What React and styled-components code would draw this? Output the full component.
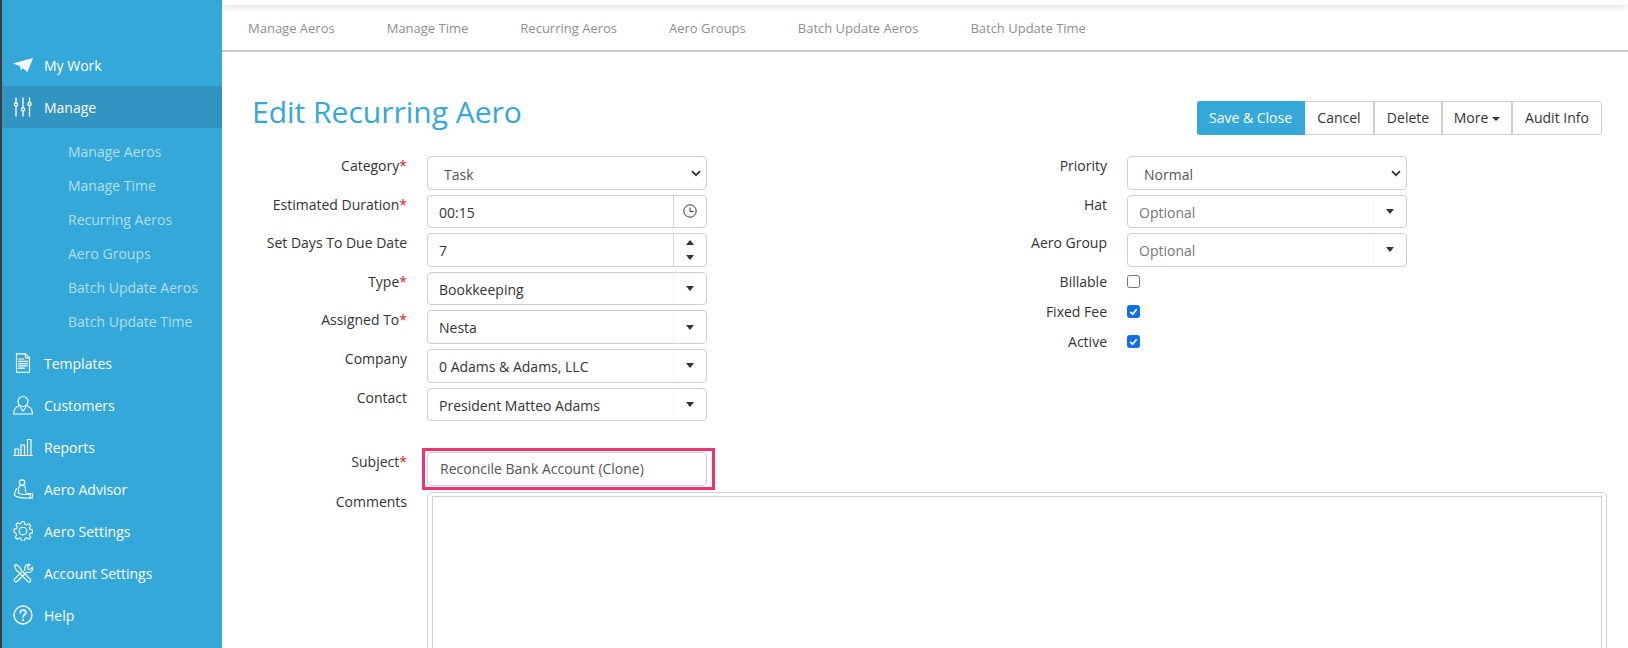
import React from 'react';
import styled, { createGlobalStyle } from 'styled-components';

const Global = createGlobalStyle`
  html, body { margin: 0; padding: 0; background: #fff; }
  #root { height: 648px; }
  * { box-sizing: border-box; }
`;

const BLUE = '#34a8d8';
const font = `"Open Sans", "Noto Sans", sans-serif`;

const Page = styled.div`
  display: flex; width: 1628px; height: 648px; overflow: hidden;
  font-family: ${font}; color: #333;
`;
const Sidebar = styled.nav`
  flex: 0 0 222px; height: 100%; background: ${BLUE};
  border-left: 2px solid #3a3f44; padding-top: 44px;
`;
const NavItem = styled.div`
  display: flex; align-items: center; height: 42px; padding-left: 11px; gap: 11px;
  color: #fff; font-size: 14px;
  background: ${p => (p.$active ? '#3194c1' : 'transparent')};
`;
const NavIcon = styled.svg`
  width: 20px; height: 20px; flex: none;
  fill: none; stroke: #fff; stroke-width: 1.15; stroke-linecap: round; stroke-linejoin: round;
`;
const SubList = styled.div`
  display: flex; flex-direction: column; padding: 7px 0 3px;
`;
const SubItem = styled.div`
  height: 34px; line-height: 34px; padding-left: 66px; font-size: 14px; color: #b3def2;
`;
const Main = styled.main`
  flex: 1; min-width: 0; display: flex; flex-direction: column;
`;
const TopStrip = styled.div`
  flex: none; height: 5px; background: #fff; position: relative;
  box-shadow: 0 2px 6px rgba(0, 0, 0, 0.14);
`;
const TabBar = styled.div`
  flex: none; display: flex; gap: 52px; align-items: center; height: 47px; padding-left: 26px;
  border-bottom: 2px solid #c9c9c9;
`;
const Tab = styled.span`
  font-size: 13px; color: #8f8f8f;
`;
const Header = styled.div`
  flex: none; display: flex; justify-content: space-between; align-items: flex-start;
  padding: 49px 26px 0 30px; height: 104px;
`;
const Title = styled.h1`
  margin: -8px 0 0; font-size: 30px; line-height: 38px; font-weight: 400; color: ${BLUE};
`;
const ButtonGroup = styled.div`
  display: flex; height: 34px;
`;
const ActionButton = styled.div`
  display: flex; align-items: center; justify-content: center; gap: 4px;
  width: ${p => p.$w}px; font-size: 14px; padding-bottom: 1px;
  border: 1px solid ${p => (p.$primary ? BLUE : '#cfcfcf')};
  border-left-width: ${p => (p.$primary || p.$afterPrimary ? 0 : 1)}px;
  background: ${p => (p.$primary ? BLUE : '#fff')};
  color: ${p => (p.$primary ? '#fff' : '#333')};
  &:first-child { border-radius: 3px 0 0 3px; }
  &:last-child { border-radius: 0 3px 3px 0; }
`;
const Caret = styled.i`
  display: inline-block; width: 0; height: 0; margin-top: 2px;
  border-left: 4px solid transparent; border-right: 4px solid transparent; border-top: 4px solid #333;
`;
const FormGrid = styled.div`
  flex: none; display: grid; grid-template-columns: 454px 454px; column-gap: 246px; padding-left: 31px;
`;
const Column = styled.div`
  display: flex; flex-direction: column;
`;
const Row = styled.div`
  display: grid; grid-template-columns: 154px 280px; column-gap: 20px;
  min-height: ${p => (p.$check ? 30 : 33.6)}px;
  align-items: ${p => (p.$check ? 'center' : 'start')};
  &:not(:first-child) { margin-top: ${p => (p.$check ? 0 : 5)}px; }
`;
const Label = styled.div`
  text-align: right; font-size: 14px; line-height: 20px; color: #333;
`;
const Req = styled.span`
  color: #d6202a;
`;
const Control = styled.div`
  display: flex; height: 33.6px; width: 280px; background: #fff;
  border: 1px solid #cfcfcf; border-radius: 4px;
  font-size: 14px; color: ${p => (p.$muted ? '#555' : '#333')};
`;
const Value = styled.div`
  flex: 1; min-width: 0; line-height: ${p => p.$lh || 34}px; padding-left: ${p => p.$pad || 11}px;
  color: ${p => p.$color || 'inherit'};
`;
const Addon = styled.div`
  flex: 0 0 33px; display: flex; flex-direction: column; align-items: center; justify-content: center; gap: 10px;
  border-left: 1px solid ${p => (p.$soft ? '#f7f7f7' : '#d4d4d4')};
`;
const Arrow = styled.i`
  display: block; width: 0; height: 0;
  border-left: 4px solid transparent; border-right: 4px solid transparent;
  ${p => (p.$up ? 'border-bottom: 5px solid #333;' : 'border-top: 5px solid #333;')}
`;
const Chevron = styled.svg`
  flex: none; width: 10px; height: 7px; margin: 13px 5px 0 0;
  fill: none; stroke: #333; stroke-width: 1.8;
`;
const ClockIcon = styled.svg`
  width: 14px; height: 14px; fill: none; stroke: #333; stroke-width: 1;
`;
const Box = styled.span`
  display: flex; align-items: center; justify-content: center;
  width: 13px; height: 13px; border-radius: 2.5px;
  border: 1px solid ${p => (p.$on ? '#0f6fe8' : '#767676')};
  background: ${p => (p.$on ? '#0f6fe8' : '#fff')};
`;
const Tick = styled.svg`
  width: 11px; height: 11px; fill: none; stroke: #fff; stroke-width: 2;
`;
const SubjectRow = styled(Row)`
  margin-top: 31px; margin-bottom: 6px;
`;
const Highlight = styled.div`
  position: relative; width: 280px;
  &::after {
    content: ''; position: absolute; left: -5px; right: -8px; top: -4px; bottom: -4px;
    border: 3px solid #f5316f; pointer-events: none;
  }
`;
const CommentsRow = styled.div`
  display: grid; grid-template-columns: 154px 1180px; column-gap: 20px; padding-left: 31px;
`;
const CommentsOuter = styled.div`
  height: 220px; padding: 3px 4px; border: 1px solid #d2d2d2; border-radius: 4px 4px 0 0;
`;
const CommentsInner = styled.div`
  height: 100%; border: 1px solid #d2d2d2;
`;

const icons = {
  plane: (
    <g>
      <path d="M0 8.500 L20 3 L14.500 17 L9.500 13 L8 15.500 L7 11 Z" fill="#fff" stroke="none" />
      <path d="M7 11 L20 3 M9.500 13 L20 3" stroke="#bfe3f3" strokeWidth=".6" />
    </g>
  ),
  sliders: (
    <g strokeWidth="1.3">
      <path d="M3 1v5M3 9v10M10 1v10M10 14v5M16.5 1v4.5M16.5 8.5V19" />
      <circle cx="3" cy="7.5" r="1.6" /><circle cx="10" cy="12.5" r="1.6" /><circle cx="16.5" cy="7" r="1.6" />
    </g>
  ),
  doc: (
    <g>
      <path d="M3.5 0.8h9l4 4.2v14.2h-13z" /><path d="M12.5 0.8v4.2h4" />
      <path d="M5.5 6h5M5.5 8.3h9M5.5 10.6h9M5.5 12.9h9M5.5 15.2h6" strokeWidth="1.2" />
    </g>
  ),
  user: (
    <g>
      <circle cx="10" cy="6.5" r="5" />
      <path d="M6.5 10.5 C2.5 12 0.5 14 0.5 19h19c0-5-2-7-6-8.500" />
      <path d="M7 12l3 4 3-4" />
    </g>
  ),
  chart: (
    <path d="M0.500 18.500h19M2 18.500v-6.500h3.500v6.500M8 18.500V8h3.500v10.500M14.500 18.500V2.500H18v16" />
  ),
  advisor: (
    <g>
      <circle cx="9" cy="3.500" r="2.700" />
      <path d="M5.500 13v-4c0-1.800 1.500-2.500 3.500-2.500s3.500.7 3.500 2.500v4" />
      <path d="M3.500 9.500L1.500 15c-.5 1.500.5 2 2 2.500 3 1.500 6 1.500 9 1.500h5v-3.500H10c-2-.3-4-1-5-2" />
      <path d="M13.500 14.500h6V19h-3" />
    </g>
  ),
  gear: (
    <g>
      <circle cx="10" cy="10" r="3.800" />
      <path d="M8.500 .8h3l.5 2.700 1.800.8 2.300-1.500 2.100 2.100-1.500 2.300.8 1.800 2.700.5v3l-2.700.5-.8 1.800 1.500 2.300-2.100 2.100-2.300-1.500-1.800.8-.5 2.700h-3l-.5-2.700-1.800-.8-2.300 1.500-2.100-2.100 1.500-2.300-.8-1.800L.5 11.500v-3l2.700-.5.8-1.800L2.500 3.900l2.100-2.100 2.300 1.500 1.100-.8z" transform="translate(0.500 0) scale(.95)" />
    </g>
  ),
  tools: (
    <g>
      <path d="M1.500 3L3 1.500l4 3 .5 2 9.500 9.500c1 1 1 1.800.2 2.500s-1.700.7-2.500-.2L5 8.500l-1.500-.8z" />
      <path d="M12 7.500c-1-2 0-5.500 3-6.200 1-.2 1.500 0 2 .2L14.500 4l.5 2 2 .5 2.500-2.300c.5 2.800-1 5-3.500 5.300-1 .1-1.700 0-2.300-.3L4.500 18c-1 1-2 1-2.800.2s-.7-1.700.2-2.600L8 9.500" />
    </g>
  ),
  help: (
    <g strokeWidth="1.400">
      <circle cx="10" cy="10" r="9" />
      <path d="M7.300 7.800c0-1.700 1.200-2.800 2.800-2.800s2.800 1 2.800 2.500c0 2.200-2.800 2.300-2.800 4.500" strokeWidth="1.700" />
      <path d="M10.100 14.700v.6" strokeWidth="2" />
    </g>
  ),
};

const Item = ({ icon, active, children }) => (
  <NavItem $active={active}>
    <NavIcon viewBox="0 0 20 20" aria-hidden="true">{icons[icon]}</NavIcon>
    {children}
  </NavItem>
);

const Field = ({ label, required, children }) => (
  <Row>
    <Label>{label}{required && <Req>*</Req>}</Label>
    {children}
  </Row>
);

const NativeSelect = ({ value }) => (
  <Control $muted>
    <Value $pad={16} $lh={36}>{value}</Value>
    <Chevron viewBox="0 0 10 7"><path d="M1 1.200l4 4 4-4" /></Chevron>
  </Control>
);

const Combo = ({ value, placeholder }) => (
  <Control>
    <Value $color={placeholder ? '#777' : undefined}>{value}</Value>
    <Addon $soft><Arrow /></Addon>
  </Control>
);

const CheckField = ({ label, on }) => (
  <Row $check>
    <Label>{label}</Label>
    <Box $on={on}>{on && <Tick viewBox="0 0 12 12"><path d="M2.500 6.500l2.500 2.500 4.500-5.500" /></Tick>}</Box>
  </Row>
);

export default function App() {
  return (
    <Page>
      <Global />
      <Sidebar>
        <Item icon="plane">My Work</Item>
        <Item icon="sliders" active>Manage</Item>
        <SubList>
          {['Manage Aeros', 'Manage Time', 'Recurring Aeros', 'Aero Groups', 'Batch Update Aeros', 'Batch Update Time'].map(t => (
            <SubItem key={t}>{t}</SubItem>
          ))}
        </SubList>
        <Item icon="doc">Templates</Item>
        <Item icon="user">Customers</Item>
        <Item icon="chart">Reports</Item>
        <Item icon="advisor">Aero Advisor</Item>
        <Item icon="gear">Aero Settings</Item>
        <Item icon="tools">Account Settings</Item>
        <Item icon="help">Help</Item>
      </Sidebar>
      <Main>
        <TopStrip />
        <TabBar>
          {['Manage Aeros', 'Manage Time', 'Recurring Aeros', 'Aero Groups', 'Batch Update Aeros', 'Batch Update Time'].map(t => (
            <Tab key={t}>{t}</Tab>
          ))}
        </TabBar>
        <Header>
          <Title>Edit Recurring Aero</Title>
          <ButtonGroup>
            <ActionButton $primary $w={108}>Save &amp; Close</ActionButton>
            <ActionButton $afterPrimary $w={69}>Cancel</ActionButton>
            <ActionButton $w={68}>Delete</ActionButton>
            <ActionButton $w={70}>More <Caret /></ActionButton>
            <ActionButton $w={90}>Audit Info</ActionButton>
          </ButtonGroup>
        </Header>
        <FormGrid>
          <Column>
            <Field label="Category" required><NativeSelect value="Task" /></Field>
            <Field label="Estimated Duration" required>
              <Control>
                <Value>00:15</Value>
                <Addon>
                  <ClockIcon viewBox="0 0 14 14"><circle cx="7" cy="7" r="6.200" /><path d="M7 3.500V7.500h3.500" /></ClockIcon>
                </Addon>
              </Control>
            </Field>
            <Field label="Set Days To Due Date">
              <Control>
                <Value>7</Value>
                <Addon><Arrow $up /><Arrow /></Addon>
              </Control>
            </Field>
            <Field label="Type" required><Combo value="Bookkeeping" /></Field>
            <Field label="Assigned To" required><Combo value="Nesta" /></Field>
            <Field label="Company"><Combo value="0 Adams &amp; Adams, LLC" /></Field>
            <Field label="Contact"><Combo value="President Matteo Adams" /></Field>
          </Column>
          <Column>
            <Field label="Priority"><NativeSelect value="Normal" /></Field>
            <Field label="Hat"><Combo value="Optional" placeholder /></Field>
            <Field label="Aero Group"><Combo value="Optional" placeholder /></Field>
            <CheckField label="Billable" />
            <CheckField label="Fixed Fee" on />
            <CheckField label="Active" on />
          </Column>
        </FormGrid>
        <FormGrid>
          <Column>
            <SubjectRow>
              <Label>Subject<Req>*</Req></Label>
              <Highlight>
                <Control $muted><Value $pad={12} $lh={32}>Reconcile Bank Account (Clone)</Value></Control>
              </Highlight>
            </SubjectRow>
          </Column>
        </FormGrid>
        <CommentsRow>
          <Label>Comments</Label>
          <CommentsOuter><CommentsInner /></CommentsOuter>
        </CommentsRow>
      </Main>
    </Page>
  );
}
